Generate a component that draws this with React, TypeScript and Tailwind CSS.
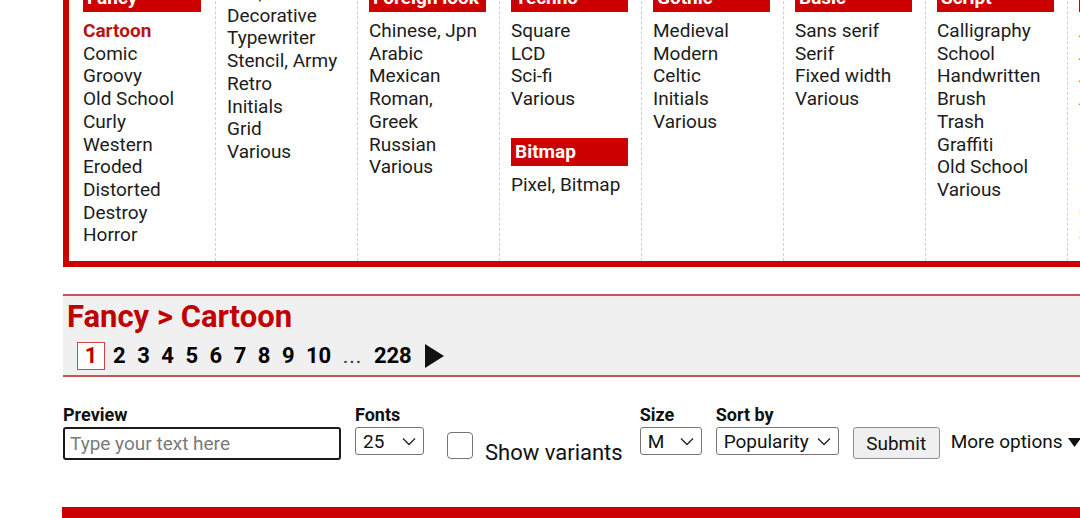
import React from 'react';

type Column = {
  header?: string;
  items: string[];
  sub?: { header: string; items: string[] };
  first?: boolean;
};

const columns: Column[] = [
  {
    header: 'Fancy',
    first: true,
    items: ['Cartoon', 'Comic', 'Groovy', 'Old School', 'Curly', 'Western', 'Eroded', 'Distorted', 'Destroy', 'Horror'],
  },
  { items: ['Fire, Ice', 'Decorative', 'Typewriter', 'Stencil, Army', 'Retro', 'Initials', 'Grid', 'Various'] },
  { header: 'Foreign look', items: ['Chinese, Jpn', 'Arabic', 'Mexican', 'Roman,', 'Greek', 'Russian', 'Various'] },
  {
    header: 'Techno',
    items: ['Square', 'LCD', 'Sci-fi', 'Various'],
    sub: { header: 'Bitmap', items: ['Pixel, Bitmap'] },
  },
  { header: 'Gothic', items: ['Medieval', 'Modern', 'Celtic', 'Initials', 'Various'] },
  { header: 'Basic', items: ['Sans serif', 'Serif', 'Fixed width', 'Various'] },
  { header: 'Script', items: ['Calligraphy', 'School', 'Handwritten', 'Brush', 'Trash', 'Graffiti', 'Old School', 'Various'] },
  { header: 'Dingbats', items: ['Alien', 'Animals', 'Army', 'Ancient', 'Esoteric', 'Hands', 'Kids', 'Logos', 'Objects', 'Sport'] },
];

const pages = ['2', '3', '4', '5', '6', '7', '8', '9', '10'];

const Chevron = () => (
  <svg width="14" height="9" viewBox="0 0 14 9" fill="none" className="shrink-0">
    <path d="M1 1.5 L7 7.5 L13 1.5" stroke="#222" strokeWidth="1.3" />
  </svg>
);

const Select = ({ value, width }: { value: string; width: string }) => (
  <div
    className={`flex h-[28px] items-center justify-between rounded-[3px] border border-[#767676] bg-white pl-[7px] pr-[7px] text-[19px] leading-none text-[#111] ${width}`}
  >
    <span>{value}</span>
    <Chevron />
  </div>
);

const CategoryHeader = ({ label }: { label: string }) => (
  <div className="h-[28px] bg-[#cc0000] pl-[4px] text-[19px] font-bold leading-[28px] text-white">{label}</div>
);

export default function App() {
  return (
    <div className="h-[518px] w-[1080px] overflow-hidden bg-white font-['Roboto','Liberation_Sans',sans-serif] text-[#1c1c1c]">
      {/* category menu, scrolled so its top is above the window */}
      <div className="-mt-[40px] ml-[63px] flex w-[1100px] border-[6px] border-r-0 border-[#cc0000]">
        {columns.map((col, i) => (
          <div
            key={i}
            className={`shrink-0 border-r border-dashed border-[#cfcfcf] pb-[14px] ${
              col.first ? 'w-[147px] pl-[14px] pr-[14px]' : 'w-[142px] pl-[11px] pr-[13px]'
            } ${col.header ? 'pt-[18px]' : 'pt-[16px]'}`}
          >
            {col.header && <CategoryHeader label={col.header} />}
            <ul className={`${col.header ? 'mt-[8px]' : ''} text-[19px] leading-[22.7px]`}>
              {col.items.map((it) => (
                <li
                  key={it}
                  className={`whitespace-nowrap ${col.first && it === 'Cartoon' ? 'font-bold text-[#b81414]' : ''}`}
                >
                  {it}
                </li>
              ))}
            </ul>
            {col.sub && (
              <div className="mt-[27px]">
                <CategoryHeader label={col.sub.header} />
                <ul className="mt-[8px] text-[19px] leading-[22.7px]">
                  {col.sub.items.map((it) => (
                    <li key={it} className="whitespace-nowrap">
                      {it}
                    </li>
                  ))}
                </ul>
              </div>
            )}
          </div>
        ))}
      </div>

      {/* current category + pagination */}
      <div className="ml-[63px] mt-[27px] border-y-2 border-[#c85454] bg-[#f0f0f0] pb-[5px] pt-[5px]">
        <h1 className="pl-[4px] text-[31px] font-bold leading-[32px] text-[#c00000]">Fancy &gt; Cartoon</h1>
        <div className="mt-[9px] flex items-center pl-[14px] text-[22px] font-bold leading-none text-black">
          <span className="flex h-[28px] w-[28px] items-center justify-center border border-[#c44] bg-white text-[#c00000]">
            1
          </span>
          <div className="ml-[8px] flex items-center gap-[11.5px]">
            {pages.map((p) => (
              <span key={p}>{p}</span>
            ))}
            <span className="text-[21px] font-normal tracking-[1px] text-[#333]">...</span>
            <span>228</span>
            <svg width="19" height="24" viewBox="0 0 19 24" className="ml-[2px]">
              <path d="M0 0 L19 12 L0 24 Z" fill="#111" />
            </svg>
          </div>
        </div>
      </div>

      {/* preview form */}
      <div className="ml-[63px] mt-[27px] flex w-[1100px] items-start whitespace-nowrap text-[#111]">
        <div className="flex shrink-0 flex-col">
          <label className="text-[18px] font-bold leading-[21px]">Preview</label>
          <input
            className="mt-[2px] h-[33px] w-[278px] rounded-[3px] border-[2.5px] border-[#1a1a1a] px-[5px] text-[19px] placeholder:text-[#7a7a7a] focus:outline-none"
            placeholder="Type your text here"
          />
        </div>
        <div className="ml-[14px] flex shrink-0 flex-col">
          <label className="text-[18px] font-bold leading-[21px]">Fonts</label>
          <div className="mt-[2px]">
            <Select value="25" width="w-[69px]" />
          </div>
        </div>
        <div className="ml-[23px] mt-[28px] flex shrink-0 items-start">
          <span className="h-[27px] w-[26px] shrink-0 rounded-[4px] border border-[#767676] bg-white" />
          <span className="ml-[12px] mt-[9px] text-[22px] leading-[24px]">Show variants</span>
        </div>
        <div className="ml-[17px] flex shrink-0 flex-col">
          <label className="text-[18px] font-bold leading-[21px]">Size</label>
          <div className="mt-[2px]">
            <Select value="M" width="w-[62px]" />
          </div>
        </div>
        <div className="ml-[14px] flex shrink-0 flex-col">
          <label className="text-[18px] font-bold leading-[21px]">Sort by</label>
          <div className="mt-[2px]">
            <Select value="Popularity" width="w-[123px]" />
          </div>
        </div>
        <button className="ml-[14px] mt-[23px] h-[32px] w-[87px] shrink-0 rounded-[3px] border border-[#8f8f8f] bg-[#efefef] text-[19px] leading-none text-[#111]">
          Submit
        </button>
        <div className="ml-[11px] mt-[26px] flex shrink-0 items-center text-[19px] leading-[24px]">
          More options
          <svg width="13" height="9" viewBox="0 0 13 9" className="ml-[5px]">
            <path d="M0 0 L13 0 L6.5 9 Z" fill="#111" />
          </svg>
        </div>
      </div>

      {/* next section, mostly below the window */}
      <div className="ml-[62px] mt-[42px] h-[40px] bg-[#cc0000]" />
    </div>
  );
}
